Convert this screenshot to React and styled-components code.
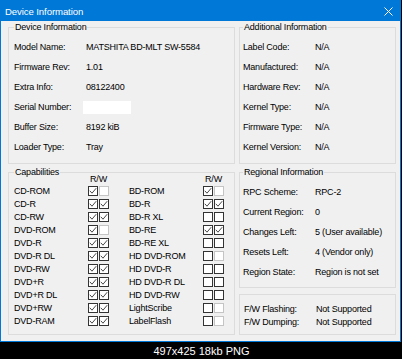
import React from "react";
import styled, { createGlobalStyle } from "styled-components";

const GlobalStyle = createGlobalStyle`
  html, body {
    margin: 0;
    padding: 0;
    background: #000;
  }
  body {
    font-family: "Liberation Sans", Arial, sans-serif;
    color: #000;
  }
`;

const Page = styled.div`
  width: 402px;
  height: 359px;
  display: flex;
  flex-direction: column;
  background: #000;
`;

const Window = styled.div`
  width: 401px;
  height: 342px;
  box-sizing: border-box;
  border: 1px solid #0078d7;
  border-top: 0;
  background: #f0f0f0;
  display: flex;
  flex-direction: column;
`;

const TitleBar = styled.div`
  height: 21px;
  flex: none;
  background: #0078d7;
  color: #fff;
  display: flex;
  align-items: center;
  justify-content: space-between;
  padding: 1px 7px 0 4px;
  box-sizing: border-box;
  font-size: 9.6px;
  letter-spacing: -0.1px;
`;

const Body = styled.div`
  flex: 1;
  display: grid;
  grid-template-columns: 227px 157px;
  column-gap: 4px;
  padding: 0 4px 0 7px;
  font-size: 9px;
  letter-spacing: -0.2px;
`;

const Column = styled.div`
  display: flex;
  flex-direction: column;
  gap: 2px;
`;

const Group = styled.fieldset`
  margin: ${(p) => p.$mt || 0}px 0 0 0;
  min-width: 0;
  border: 1px solid #dcdcdc;
  padding: ${(p) => p.$pt}px 0 ${(p) => p.$pb}px ${(p) => p.$pl}px;
  box-sizing: border-box;
`;

const Legend = styled.legend`
  padding: 0 1px;
  margin-left: 0;
  line-height: 12px;
  height: 12px;
`;

const InfoRow = styled.div`
  display: flex;
  align-items: center;
  height: ${(p) => p.$h}px;
  white-space: nowrap;
`;

const Label = styled.span`
  width: 72px;
  flex: none;
`;

const Field = styled.span`
  display: block;
  width: 48px;
  height: 13px;
  margin-left: -3px;
  background: #fff;
`;

const CapGrid = styled.div`
  display: grid;
  grid-template-columns: 115px 1fr;
  margin-top: -4px;
`;

const CapRow = styled.div`
  display: flex;
  align-items: center;
  height: ${(p) => (p.$head ? 10 : 13.1)}px;
  white-space: nowrap;
`;

const CapLabel = styled.span`
  width: 74px;
  flex: none;
`;

const Pair = styled.span`
  display: flex;
  gap: 1px;
  width: 21px;
  justify-content: center;
`;

const Box = styled.span`
  width: 10px;
  height: 10px;
  box-sizing: border-box;
  border: 1px solid ${(p) => (p.$disabled ? "#c4c4c4" : "#333")};
  background: #fff;
  display: flex;
  align-items: center;
  justify-content: center;
`;

const Caption = styled.div`
  flex: 1;
  display: flex;
  align-items: center;
  justify-content: center;
  color: #fff;
  font-size: 11px;
  padding-left: 1px;
`;

const Check = () => (
  <svg width="8" height="8" viewBox="0 0 8 8">
    <path d="M0.8 3.8 L3 6.2 L7.2 1.2" fill="none" stroke="#333" strokeWidth="0.9" />
  </svg>
);

const CheckBox = ({ checked, disabled }) => (
  <Box $disabled={disabled}>{checked && <Check />}</Box>
);

const deviceInfo = [
  ["Model Name:", "MATSHITA BD-MLT SW-5584"],
  ["Firmware Rev:", "1.01"],
  ["Extra Info:", "08122400"],
  ["Serial Number:", null],
  ["Buffer Size:", "8192 kiB"],
  ["Loader Type:", "Tray"],
];

const additionalInfo = [
  ["Label Code:", "N/A"],
  ["Manufactured:", "N/A"],
  ["Hardware Rev:", "N/A"],
  ["Kernel Type:", "N/A"],
  ["Firmware Type:", "N/A"],
  ["Kernel Version:", "N/A"],
];

const regionalInfo = [
  ["RPC Scheme:", "RPC-2"],
  ["Current Region:", "0"],
  ["Changes Left:", "5 (User available)"],
  ["Resets Left:", "4 (Vendor only)"],
  ["Region State:", "Region is not set"],
];

const flashInfo = [
  ["F/W Flashing:", "Not Supported"],
  ["F/W Dumping:", "Not Supported"],
];

// [name, read, write, writeDisabled]
const capsLeft = [
  ["CD-ROM", true, false, true],
  ["CD-R", true, true],
  ["CD-RW", true, true],
  ["DVD-ROM", true, false, true],
  ["DVD-R", true, true],
  ["DVD-R DL", true, true],
  ["DVD-RW", true, true],
  ["DVD+R", true, true],
  ["DVD+R DL", true, true],
  ["DVD+RW", true, true],
  ["DVD-RAM", true, true],
];

const capsRight = [
  ["BD-ROM", true, false, true],
  ["BD-R", true, true],
  ["BD-R XL", false, false],
  ["BD-RE", true, true],
  ["BD-RE XL", false, false],
  ["HD DVD-ROM", false, false, true],
  ["HD DVD-R", false, false],
  ["HD DVD-R DL", false, false],
  ["HD DVD-RW", false, false],
  ["LightScribe", false, false, true],
  ["LabelFlash", false, false, true],
];

const InfoRows = ({ rows, h }) =>
  rows.map(([label, value]) => (
    <InfoRow key={label} $h={h}>
      <Label>{label}</Label>
      {value === null ? <Field /> : <span>{value}</span>}
    </InfoRow>
  ));

const CapColumn = ({ items }) => (
  <div>
    <CapRow $head>
      <CapLabel />
      <Pair>R/W</Pair>
    </CapRow>
    {items.map(([name, r, w, wOff]) => (
      <CapRow key={name}>
        <CapLabel>{name}</CapLabel>
        <Pair>
          <CheckBox checked={r} />
          <CheckBox checked={w} disabled={wOff} />
        </Pair>
      </CapRow>
    ))}
  </div>
);

export default function App() {
  return (
    <Page>
      <GlobalStyle />
      <Window>
        <TitleBar>
          <span>Device Information</span>
          <svg width="9" height="9" viewBox="0 0 9 9">
            <path d="M0.5 0.5 L8.5 8.5 M8.5 0.5 L0.5 8.5" stroke="#fff" strokeWidth="1" />
          </svg>
        </TitleBar>
        <Body>
          <Column>
            <Group $pt={4} $pb={6} $pl={5}>
              <Legend>Device Information</Legend>
              <InfoRows rows={deviceInfo} h={20} />
            </Group>
            <Group $pt={0} $pb={6} $pl={5}>
              <Legend>Capabilities</Legend>
              <CapGrid>
                <CapColumn items={capsLeft} />
                <CapColumn items={capsRight} />
              </CapGrid>
            </Group>
          </Column>
          <Column>
            <Group $pt={4} $pb={6} $pl={3}>
              <Legend>Additional Information</Legend>
              <InfoRows rows={additionalInfo} h={20} />
            </Group>
            <Group $pt={4} $pb={5} $pl={3}>
              <Legend>Regional Information</Legend>
              <InfoRows rows={regionalInfo} h={20} />
            </Group>
            <Group $mt={4} $pt={7} $pb={6} $pl={4}>
              <InfoRows rows={flashInfo} h={13} />
            </Group>
          </Column>
        </Body>
      </Window>
      <Caption>497x425 18kb PNG</Caption>
    </Page>
  );
}
